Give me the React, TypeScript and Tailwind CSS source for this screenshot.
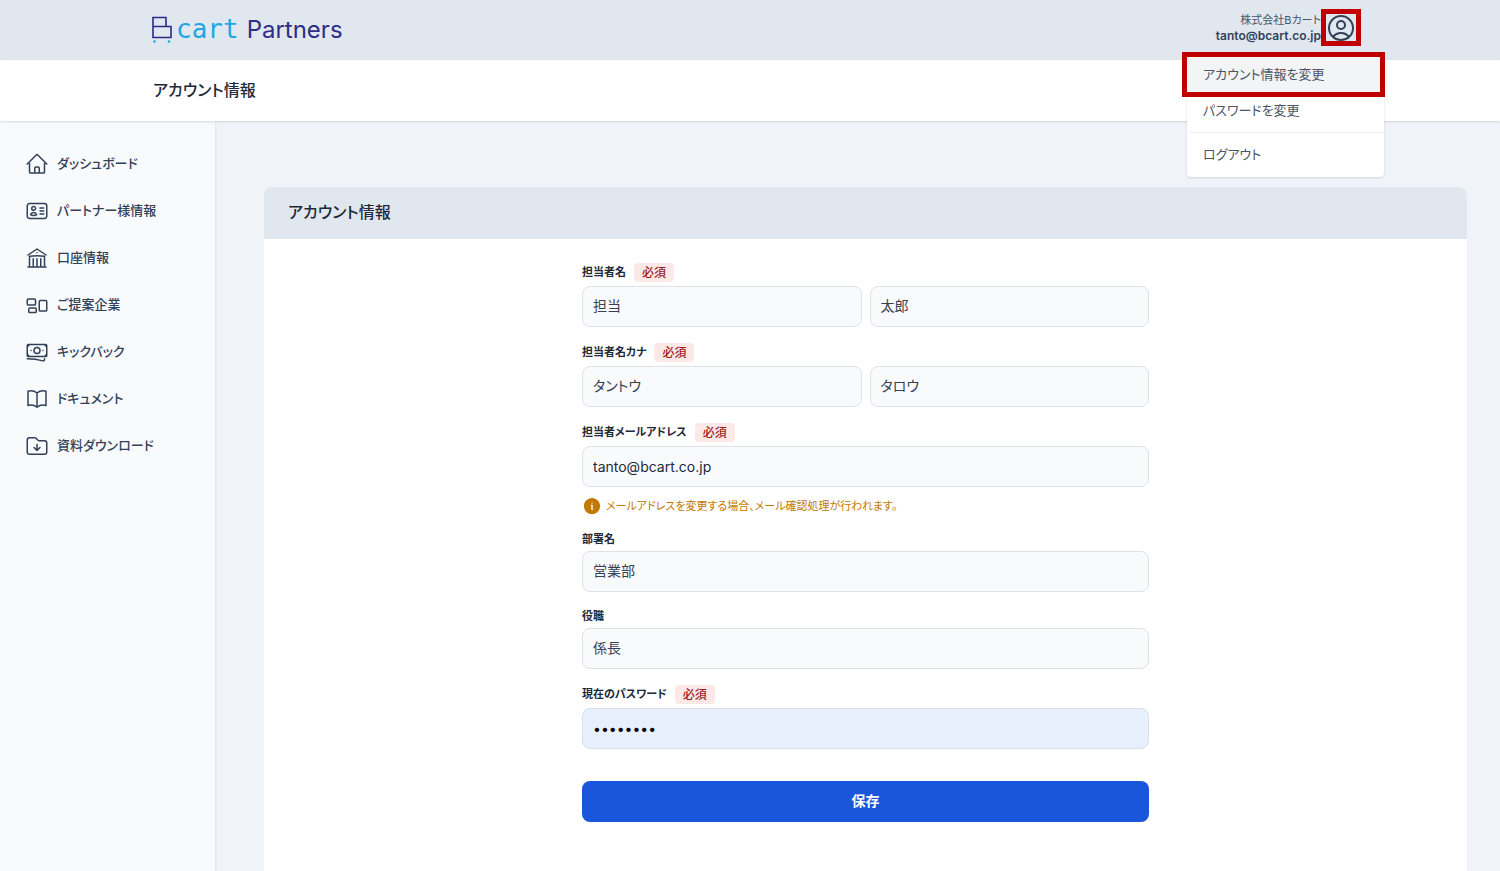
import { useState } from 'react';
import type { ReactNode } from 'react';
import type { IconType } from 'react-icons';
import {
  HiOutlineHome,
  HiOutlineIdentification,
  HiOutlineBuildingLibrary,
  HiOutlineRectangleGroup,
  HiOutlineBanknotes,
  HiOutlineBookOpen,
  HiOutlineFolderArrowDown,
  HiOutlineUserCircle,
  HiInformationCircle,
} from 'react-icons/hi2';

type NavItem = { label: string; icon: IconType };

const NAV: NavItem[] = [
  { label: 'ダッシュボード', icon: HiOutlineHome },
  { label: 'パートナー様情報', icon: HiOutlineIdentification },
  { label: '口座情報', icon: HiOutlineBuildingLibrary },
  { label: 'ご提案企業', icon: HiOutlineRectangleGroup },
  { label: 'キックバック', icon: HiOutlineBanknotes },
  { label: 'ドキュメント', icon: HiOutlineBookOpen },
  { label: '資料ダウンロード', icon: HiOutlineFolderArrowDown },
];

const INPUT =
  'block w-full min-w-0 h-[41px] rounded-lg border border-[#dfe2e8] bg-[#f9fafc] px-2.5 text-sm';
const INPUT_JA = `${INPUT} pb-1 text-gray-700`;

function Logo() {
  return (
    <a href="#" className="flex items-center gap-1 pt-1" aria-label="Bcart Partners">
      <svg width="20" height="28" viewBox="0 0 20 28" fill="none" aria-hidden>
        <path d="M1 1.5H14V10.5H19V21.5H1ZM1 10.5H14" stroke="#2b2a86" strokeWidth="1.6" />
        <circle cx="2.5" cy="25.5" r="1.3" fill="#1ea7e1" />
        <circle cx="17" cy="25.5" r="1.3" fill="#1ea7e1" />
      </svg>
      <span className="flex items-baseline gap-2 leading-7">
        <span className="font-['DejaVu_Sans_Mono'] text-[26px] leading-7 text-[#1ea7e1]">cart</span>
        <span className="font-[Inter] text-2xl leading-7 text-[#2f2d86]">Partners</span>
      </span>
    </a>
  );
}

function UserMenu() {
  const [open, setOpen] = useState(true);
  return (
    <div className="relative flex items-center">
      <div className="text-right leading-4">
        <p className="text-[11px] leading-4 text-gray-600">株式会社Bカート</p>
        <p className="text-xs font-semibold text-slate-700">tanto@bcart.co.jp</p>
      </div>
      <button
        type="button"
        aria-label="アカウントメニュー"
        onClick={() => setOpen(!open)}
        className="flex h-[37px] w-10 items-center justify-center border-[5px] border-[#c00000] text-slate-700"
      >
        <HiOutlineUserCircle className="size-8 shrink-0" />
      </button>
      {open && (
        <div className="absolute -right-6 top-[43px] z-10 w-[203px] text-[13px] text-gray-600">
          <a href="#" className="relative z-10 flex h-[45px] items-center border-[5px] border-[#c00000] bg-gray-100 px-4">
            アカウント情報を変更
          </a>
          <div className="-mt-1 ml-[5px] mr-px rounded-b bg-white shadow">
            <a href="#" className="flex h-10 items-center border-b border-gray-100 px-4 pb-1">パスワードを変更</a>
            <a href="#" className="flex h-11 items-center px-4">ログアウト</a>
          </div>
        </div>
      )}
    </div>
  );
}

function Field({ id, label, required, children }: { id: string; label: string; required?: boolean; children: ReactNode }) {
  return (
    <div>
      <div className={required ? 'mb-1 flex h-[19px] items-center gap-2' : 'mb-1 flex h-4 items-center'}>
        <label htmlFor={id} className="text-[11px] font-bold text-gray-800">{label}</label>
        {required && (
          <span className="flex h-full items-center rounded bg-[#fde8e8] px-2 text-xs font-medium text-[#9b1c1c]">必須</span>
        )}
      </div>
      {children}
    </div>
  );
}

export default function App() {
  return (
    <div className="flex min-h-screen flex-col bg-[#f0f3f8] font-[Inter,'Noto_Sans_CJK_JP',sans-serif] [font-feature-settings:'palt']">
      <header className="flex h-[60px] items-center justify-between bg-[#e1e7ef] pb-[5px] pl-[152px] pr-[139px]">
        <Logo />
        <UserMenu />
      </header>
      <div className="relative flex h-[61px] items-center bg-white pb-0.5 pl-[153px] shadow">
        <h1 className="text-base font-medium text-gray-800">アカウント情報</h1>
      </div>

      <div className="flex flex-1">
        <nav className="w-[215px] shrink-0 bg-[#f9fafc] pt-[19px] shadow-sm">
          <ul>
            {NAV.map(({ label, icon: Icon }) => (
              <li key={label}>
                <a href="#" className="flex h-[47px] items-center gap-2 pl-[25px] text-[13px] font-medium text-slate-700">
                  <Icon className="size-6 shrink-0" />
                  {label}
                </a>
              </li>
            ))}
          </ul>
        </nav>

        <main className="flex flex-1 flex-col pl-[49px] pr-[33px] pt-[66px]">
          <section className="flex-1 overflow-hidden rounded-t-lg bg-white">
            <h2 className="flex h-[52px] items-center bg-[#e1e7ef] px-6 pb-0.5 text-base font-medium text-gray-800">アカウント情報</h2>
            <form
              className="mx-auto flex max-w-[567px] flex-col gap-4 pb-12 pt-6"
              onSubmit={e => e.preventDefault()}
            >
              <Field id="lastName" label="担当者名" required>
                <div className="flex gap-2">
                  <input id="lastName" defaultValue="担当" className={INPUT_JA} />
                  <input aria-label="名" defaultValue="太郎" className={INPUT_JA} />
                </div>
              </Field>
              <Field id="lastKana" label="担当者名カナ" required>
                <div className="flex gap-2">
                  <input id="lastKana" defaultValue="タントウ" className={INPUT_JA} />
                  <input aria-label="メイ" defaultValue="タロウ" className={INPUT_JA} />
                </div>
              </Field>
              <Field id="email" label="担当者メールアドレス" required>
                <input id="email" type="email" defaultValue="tanto@bcart.co.jp" className={`${INPUT} text-gray-800`} />
                <p className="mt-2.5 flex h-[18px] items-center gap-1 text-[11px] text-[#c27803]">
                  <HiInformationCircle className="size-5 shrink-0" />
                  メールアドレスを変更する場合、メール確認処理が行われます。
                </p>
              </Field>
              <Field id="department" label="部署名">
                <input id="department" defaultValue="営業部" className={INPUT_JA} />
              </Field>
              <Field id="position" label="役職">
                <input id="position" defaultValue="係長" className={INPUT_JA} />
              </Field>
              <Field id="password" label="現在のパスワード" required>
                <input
                  id="password"
                  type="password"
                  defaultValue="password"
                  className="block h-[41px] w-full rounded-lg border border-[#d9e0ec] bg-[#e8f0fe] px-2.5 text-sm text-black"
                />
              </Field>
              <button type="submit" className="mt-4 h-[41px] rounded-lg bg-[#1a56db] pb-0.5 text-sm font-bold text-white">保存</button>
            </form>
          </section>
        </main>
      </div>
    </div>
  );
}
